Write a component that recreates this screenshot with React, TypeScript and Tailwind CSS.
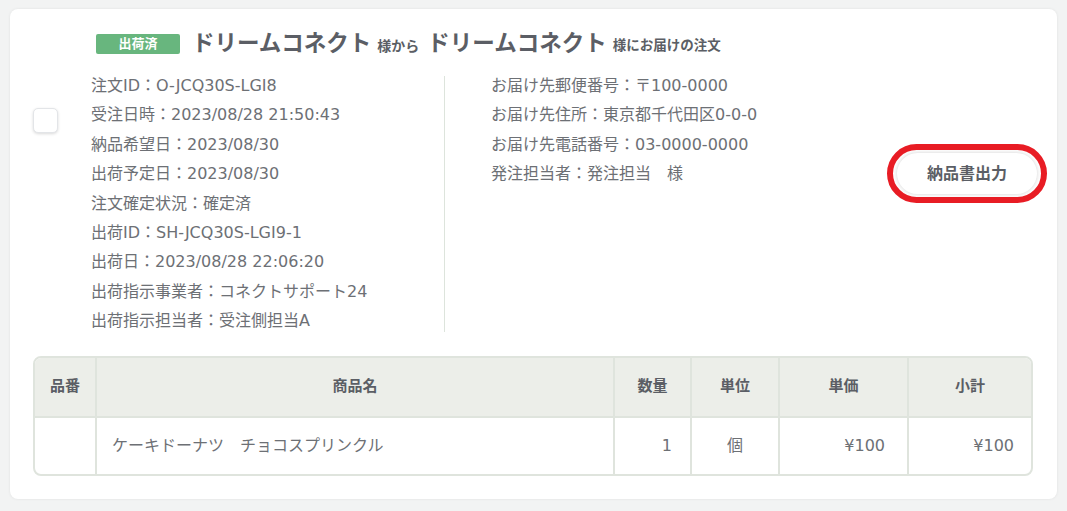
import React from 'react'

const leftRows = [
  '注文ID：O-JCQ30S-LGI8',
  '受注日時：2023/08/28 21:50:43',
  '納品希望日：2023/08/30',
  '出荷予定日：2023/08/30',
  '注文確定状況：確定済',
  '出荷ID：SH-JCQ30S-LGI9-1',
  '出荷日：2023/08/28 22:06:20',
  '出荷指示事業者：コネクトサポート24',
  '出荷指示担当者：受注側担当A',
]

const rightRows = [
  'お届け先郵便番号：〒100-0000',
  'お届け先住所：東京都千代田区0-0-0',
  'お届け先電話番号：03-0000-0000',
  '発注担当者：発注担当　様',
]

const font = { fontFamily: '"DejaVu Sans", "Noto Sans CJK JP", sans-serif' }

export default function App() {
  return (
    <div className="h-[511px] w-full bg-[#f2f3f3] pl-[10px] pt-[9px]" style={font}>
      <div className="w-[1047px] h-[490px] bg-white rounded-lg shadow-[0_0_3px_rgba(0,0,0,0.08)] pl-[23px] pr-[24px] pt-[24px]">
        <div className="flex">
          <div className="mt-[75px] w-[25px] h-[25px] shrink-0 rounded-[5px] border border-[#e3e5e8] bg-white shadow-[0_1px_3px_rgba(0,0,0,0.15)]" />
          <div className="ml-[33px] flex-1">
            {/* header */}
            <div className="ml-[5px] flex items-center h-[21px] text-[#5b5e65] font-bold">
              <span className="w-[84px] h-[20px] flex items-center justify-center rounded-[2px] bg-[#68b67e] text-white text-[13px] leading-none">
                出荷済
              </span>
              <span className="ml-[12px] text-[22.5px] leading-none">ドリームコネクト</span>
              <span className="ml-[6px] text-[14px] leading-none mt-[4px]">様から</span>
              <span className="ml-[8px] text-[22.5px] leading-none">ドリームコネクト</span>
              <span className="ml-[6px] text-[13.5px] leading-none mt-[4px]">様にお届けの注文</span>
            </div>

            {/* details */}
            <div className="mt-[17px] flex text-[16px] text-[#6d7075] leading-[29.4px]">
              <div className="w-[353px]">
                {leftRows.map((r) => (
                  <div key={r}>{r}</div>
                ))}
              </div>
              <div className="w-px bg-[#dde4dc] mt-[5px] h-[256px]" />
              <div className="pl-[46px]">
                {rightRows.map((r) => (
                  <div key={r}>{r}</div>
                ))}
              </div>
              <div className="ml-auto mt-[82px] mr-[-4px] relative h-[41px]">
                <button className="w-[140px] h-[41px] rounded-full bg-white shadow-[0_0_4px_rgba(0,0,0,0.18)] text-[16px] font-bold text-[#5b5e65] leading-none">
                  納品書出力
                </button>
                <div className="absolute -left-[10px] -right-[10px] -top-[9px] -bottom-[9px] rounded-[30px] border-[6px] border-[#e81c24] pointer-events-none" />
              </div>
            </div>
          </div>
        </div>

        {/* table */}
        <div className="mt-[20px] w-[1000px] rounded-lg border-2 border-[#dfe4dd] overflow-hidden">
          <div className="grid grid-cols-[60px_518px_77px_88px_129px_124px] bg-[#eceee9] h-[58px] text-[15px] font-bold text-[#5b5e65]">
            <div className="flex items-center justify-center">品番</div>
            <div className="flex items-center justify-center border-l-2 border-[#dfe4dd]">商品名</div>
            <div className="flex items-center justify-center border-l-2 border-[#dfe4dd]">数量</div>
            <div className="flex items-center justify-center border-l-2 border-[#dfe4dd]">単位</div>
            <div className="flex items-center justify-center border-l-2 border-[#dfe4dd]">単価</div>
            <div className="flex items-center justify-center border-l-2 border-[#dfe4dd]">小計</div>
          </div>
          <div className="grid grid-cols-[60px_518px_77px_88px_129px_124px] border-t-2 border-[#dfe4dd] h-[58px] text-[16px] text-[#6d7075]">
            <div />
            <div className="flex items-center pl-[15px] border-l-2 border-[#dfe4dd]">ケーキドーナツ　チョコスプリンクル</div>
            <div className="flex items-center justify-end pr-[18px] border-l-2 border-[#dfe4dd]">1</div>
            <div className="flex items-center justify-center border-l-2 border-[#dfe4dd]">個</div>
            <div className="flex items-center justify-end pr-[22px] border-l-2 border-[#dfe4dd]">¥100</div>
            <div className="flex items-center justify-end pr-[17px] border-l-2 border-[#dfe4dd]">¥100</div>
          </div>
        </div>
      </div>
    </div>
  )
}
